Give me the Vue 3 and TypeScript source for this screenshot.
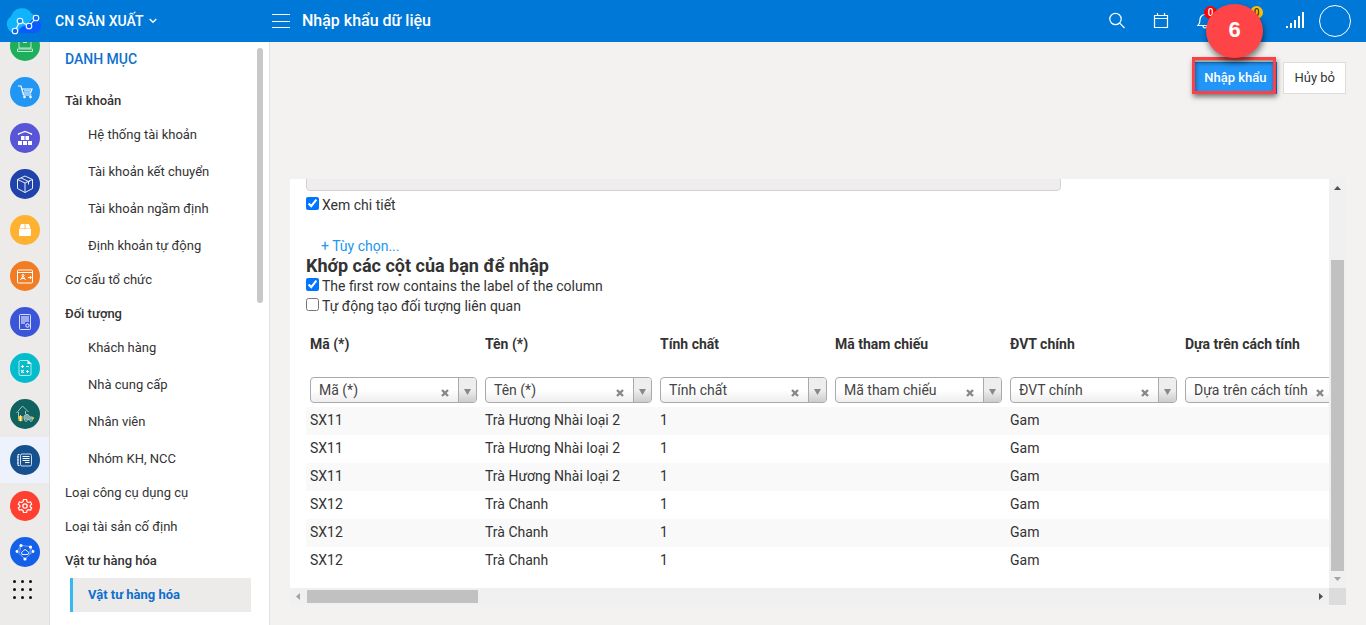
<script setup lang="ts">
import { ref } from 'vue'

interface MenuGroup {
  label: string
  header?: boolean
  items?: string[]
}

const modules = [
  { id: 'pos', label: 'Bán hàng', color: '#1fae5b' },
  { id: 'cart', label: 'Mua hàng', color: '#2196f3' },
  { id: 'store', label: 'Cửa hàng', color: '#5856d6' },
  { id: 'box', label: 'Kho', color: '#1f43a8' },
  { id: 'package', label: 'Thành phẩm', color: '#ffb232' },
  { id: 'board', label: 'Chuyển đổi', color: '#f17c24' },
  { id: 'invoice', label: 'Hóa đơn', color: '#3b55d9' },
  { id: 'calc', label: 'Tính giá', color: '#04bccb' },
  { id: 'asset', label: 'Tài sản', color: '#0f625f' },
  { id: 'ledger', label: 'Danh mục', color: '#15508f' },
  { id: 'gear', label: 'Thiết lập', color: '#ff3f30' },
  { id: 'network', label: 'Kết nối', color: '#1560e8' },
]
const activeModule = ref('ledger')

const menu: MenuGroup[] = [
  {
    label: 'Tài khoản',
    header: true,
    items: ['Hệ thống tài khoản', 'Tài khoản kết chuyển', 'Tài khoản ngầm định', 'Định khoản tự động'],
  },
  { label: 'Cơ cấu tổ chức' },
  { label: 'Đối tượng', header: true, items: ['Khách hàng', 'Nhà cung cấp', 'Nhân viên', 'Nhóm KH, NCC'] },
  { label: 'Loại công cụ dụng cụ' },
  { label: 'Loại tài sản cố định' },
  { label: 'Vật tư hàng hóa', header: true, items: ['Vật tư hàng hóa'] },
]
const activeItem = 'Vật tư hàng hóa'

const columns = ['Mã (*)', 'Tên (*)', 'Tính chất', 'Mã tham chiếu', 'ĐVT chính', 'Dựa trên cách tính']
const mapping = ref([...columns])
const rows: string[][] = [
  ['SX11', 'Trà Hương Nhài loại 2', '1', '', 'Gam', ''],
  ['SX11', 'Trà Hương Nhài loại 2', '1', '', 'Gam', ''],
  ['SX11', 'Trà Hương Nhài loại 2', '1', '', 'Gam', ''],
  ['SX12', 'Trà Chanh', '1', '', 'Gam', ''],
  ['SX12', 'Trà Chanh', '1', '', 'Gam', ''],
  ['SX12', 'Trà Chanh', '1', '', 'Gam', ''],
]

const showDetail = ref(true)
const firstRowLabel = ref(true)
const autoCreate = ref(false)
</script>

<template>
  <div class="app">
    <header class="topbar">
      <div class="brand">
        <svg class="logo" viewBox="0 0 38 28" aria-hidden="true">
          <path d="M9 26A9 9 0 0 1 5 9.500A11.500 11.500 0 0 1 26 7A8 8 0 0 1 32 13L24 26Z" fill="#0fb4fb" />
          <path d="M9 26C13 25 13 20 18 19S24 13 29 11.500A7.500 7.500 0 0 1 30 26Z" fill="#0a5cff" />
          <g stroke="#fff" stroke-width="1.100">
            <path d="M9 24L14 14L23 19L30 11" fill="none" />
            <circle cx="9" cy="24" r="2.800" fill="#0a6cf0" />
            <circle cx="14" cy="14" r="2.800" fill="#0a8cf8" />
            <circle cx="23" cy="19" r="2.800" fill="#0a5cff" />
            <circle cx="30" cy="11" r="2.800" fill="#0a6cf0" />
          </g>
        </svg>
        <button class="branch" type="button">
          CN SẢN XUẤT
          <svg width="8" height="6" viewBox="0 0 8 6" aria-hidden="true">
            <path d="M.7 1L4 4.300L7.300 1" fill="none" stroke="#fff" stroke-width="1.300" />
          </svg>
        </button>
      </div>
      <button class="burger" type="button" aria-label="Menu">
        <svg width="18" height="16" viewBox="0 0 18 16"><path d="M0 1.500H18M0 8.500H18M0 14.500H18" stroke="#fff" stroke-width="1.200" /></svg>
      </button>
      <h1>Nhập khẩu dữ liệu</h1>
      <div class="tools">
        <button type="button" aria-label="Tìm kiếm">
          <svg width="18" height="18" viewBox="0 0 18 18" fill="none" stroke="#fff" stroke-width="1.200">
            <circle cx="7.500" cy="7" r="5.700" /><path d="M11.700 11.200L16.500 16" />
          </svg>
        </button>
        <button type="button" aria-label="Lịch">
          <svg width="18" height="18" viewBox="0 0 18 18" fill="none" stroke="#fff" stroke-width="1.200">
            <path d="M2.500 3.500H15.500V15.500H2.500ZM2.500 6.500H15.500M5.500 1V3.500M12.500 1V3.500" />
          </svg>
        </button>
        <button type="button" aria-label="Thông báo">
          <svg width="18" height="18" viewBox="0 0 18 18" fill="none" stroke="#fff" stroke-width="1.200">
            <path d="M2 13.500C4 11.500 4 10 4 7.500A5 5 0 0 1 14 7.500C14 10 14 11.500 16 13.500ZM7 14C7 16.500 11 16.500 11 14" />
          </svg>
          <span class="badge">0</span>
        </button>
        <button class="chat" type="button" aria-label="Tin nhắn">
          <svg width="18" height="18" viewBox="0 0 18 18" fill="none" stroke="#fff" stroke-width="1.200">
            <path d="M2 3H16V13H8L4 16V13H2Z" />
          </svg>
          <span class="badge yellow">0</span>
        </button>
        <button type="button" aria-label="Tín hiệu">
          <svg width="18" height="18" viewBox="0 0 18 18" fill="#fff">
            <path d="M0 14H2V16H0ZM4 11H6V16H4ZM8 8H10V16H8ZM12 4H14V16H12ZM16 0H18V16H16Z" />
          </svg>
        </button>
        <button class="avatar" type="button" aria-label="Tài khoản"></button>
      </div>
    </header>

    <div class="body">
      <nav class="rail" aria-label="Phân hệ">
        <div class="rail-list">
          <button
            v-for="m in modules"
            :key="m.id"
            type="button"
            class="rail-item"
            :class="[m.id, { selected: m.id === activeModule }]"
            :aria-label="m.label"
            @click="activeModule = m.id"
          >
            <svg width="30" height="30" viewBox="0 0 30 30" fill="none" stroke="#fff" stroke-width="1">
              <circle cx="15" cy="15" r="15" :fill="m.color" stroke="none" />
              <g v-if="m.id === 'pos'" opacity=".7">
                <path d="M9 6H21V17H9ZM7.500 18H22.500V20.500H7.500ZM13 11.500H17" />
              </g>
              <g v-else-if="m.id === 'cart'">
                <path d="M8 9H11L13.500 18H21.500M11.800 12H22L20.500 16H13" stroke-width="1.200" />
                <path d="M14 13.900H20.500" />
                <circle cx="14.500" cy="20" r=".900" fill="#fff" /><circle cx="20.500" cy="20" r=".900" fill="#fff" />
              </g>
              <g v-else-if="m.id === 'store'">
                <path d="M8.500 12V11L15 8.500L21.500 11V12" stroke-width="1.200" />
                <path d="M11 13H14.500V17H11ZM15.500 13H19V17H15.500ZM8 18H12V22H8ZM13 18H17V22H13ZM18 18H22V22H18Z" fill="#fff" stroke="none" />
              </g>
              <g v-else-if="m.id === 'box'">
                <path d="M15 7L22.500 10.500V19.500L15 23.500L7.500 19.500V10.500ZM7.500 10.500L15 14L22.500 10.500M15 14V23.500M11 8.900L18.500 12.500V15.500M18.500 12.500L20 12" stroke-width=".900" />
              </g>
              <g v-else-if="m.id === 'package'" fill="#fff" stroke="none">
                <path d="M11 9H14.600V13.500H9.500ZM15.400 9H19L20.500 13.500H15.400ZM9 14H21V20Q21 21 20 21H10Q9 21 9 20Z" />
              </g>
              <g v-else-if="m.id === 'board'">
                <rect x="7.500" y="9" width="15" height="13" rx="1" /><path d="M7.500 11.500H22.500M18 16.500H21M20 15L21.500 16.500L20 18" />
                <circle cx="13" cy="14.500" r="1" /><path d="M13 15L10.500 19M13 15L15.500 19M11.500 17.500H14.500" />
              </g>
              <g v-else-if="m.id === 'invoice'">
                <rect x="9.500" y="7.500" width="11" height="15" rx="1" opacity=".8" />
                <path d="M11 10H19M11 12H19M11 14H19M11 16H15" /><circle cx="17.500" cy="18.500" r="1.700" />
              </g>
              <g v-else-if="m.id === 'calc'">
                <path d="M18 7.500H10.500Q9 7.500 9 9V21Q9 22.500 10.500 22.500H19.500Q21 22.500 21 21V10.500Z" opacity=".7" />
                <path d="M17.500 7L21.500 11H17.500Z" fill="#fff" stroke="none" />
                <path d="M11 13.500H14M12.500 12V15M16 13.500H19M11.200 17.200L13.800 19.800M13.800 17.200L11.200 19.800M16 18.500H19M17.500 17V20" stroke-width="1.100" />
              </g>
              <g v-else-if="m.id === 'asset'" stroke="#9fc4c2">
                <path d="M6.500 14L12.500 7L18.500 13M8.500 13V20M15.500 12V15" />
                <rect x="8.500" y="17" width="4" height="5" fill="#f5c32c" stroke="none" />
                <path d="M10.500 16V22.500" stroke="#fff" stroke-width=".700" />
                <path d="M14 20V17L16 15.500H18L20 18H22.500V20.500H14" fill="#7faaa8" />
                <circle cx="16" cy="21" r="1.300" fill="#0f625f" /><circle cx="21" cy="21" r="1.300" fill="#0f625f" />
                <path d="M22 18.500L24 19.500" stroke="#f5c32c" stroke-width="1.500" />
              </g>
              <g v-else-if="m.id === 'ledger'">
                <path d="M9.500 9.500H8V20.500H9.500M7 12H8.500M7 15H8.500M7 18H8.500" />
                <rect x="10.500" y="9" width="11" height="12" rx="1.500" opacity=".8" />
                <path d="M12.500 11.500H19.500M12.500 13.500H19.500M12.500 15.500H19.500M15 17.500H19.500" stroke-width="1.200" />
              </g>
              <g v-else-if="m.id === 'gear'" stroke-width="1.200">
                <path d="M13.500 8.500H16.500L17 10.700L18.700 11.500L20.500 10.800L21.700 13.200L20.200 14.500V15.700L21.700 17L20.500 19.300L18.500 18.600L17 19.500L16.500 21.500H13.500L13 19.500L11.400 18.600L9.500 19.300L8.300 17L9.800 15.700V14.500L8.300 13.200L9.500 10.800L11.400 11.500L13 10.700Z" stroke-linejoin="round" />
                <circle cx="15" cy="15" r="2.200" />
              </g>
              <g v-else>
                <path d="M11 8.500L20.500 9.500L23 14.500L15 22L7 14.500ZM11 8.500L9.500 16M20.500 9.500L20 17" stroke-width=".600" opacity=".7" />
                <path d="M12 17.500Q10.500 15 13 14.300Q15 11 17.300 14.300Q20 15 18 17.500Z" fill="#1560e8" stroke-width=".900" />
                <g fill="#fff" stroke="none"><circle cx="11" cy="8.500" r="1.600" /><circle cx="20.500" cy="10" r="1.600" /><circle cx="7" cy="14.500" r="1.400" /><circle cx="23" cy="14.500" r="1.400" /><circle cx="15" cy="22" r="1.600" /></g>
              </g>
            </svg>
          </button>
          <button class="apps" type="button" aria-label="Tất cả ứng dụng">
            <span v-for="n in 9" :key="n"></span>
          </button>
        </div>
      </nav>

      <aside class="sidebar">
        <nav class="menu" aria-label="Danh mục">
          <h2>DANH MỤC</h2>
          <section v-for="g in menu" :key="g.label">
            <h3 v-if="g.header">{{ g.label }}</h3>
            <a v-else class="plain" href="#">{{ g.label }}</a>
            <ul v-if="g.items">
              <li v-for="i in g.items" :key="i">
                <a href="#" :class="{ active: i === activeItem }">{{ i }}</a>
              </li>
            </ul>
          </section>
        </nav>
        <div class="side-scroll"><div class="side-thumb"></div></div>
      </aside>

      <main>
        <div class="actions">
          <div class="step-target">
            <button class="btn primary" type="button">Nhập khẩu</button>
            <span class="frame"></span>
            <span class="step">6</span>
          </div>
          <button class="btn" type="button">Hủy bỏ</button>
        </div>

        <div class="panel">
          <div class="content">
            <input class="file-name" type="text" aria-label="Tệp dữ liệu" disabled />
            <label class="check"><input v-model="showDetail" type="checkbox" />Xem chi tiết</label>
            <a class="options" href="#">+ Tùy chọn...</a>
            <h2>Khớp các cột của bạn để nhập</h2>
            <label class="check"><input v-model="firstRowLabel" type="checkbox" />The first row contains the label of the column</label>
            <label class="check"><input v-model="autoCreate" type="checkbox" />Tự động tạo đối tượng liên quan</label>

            <table>
              <thead>
                <tr><th v-for="c in columns" :key="c" scope="col">{{ c }}</th></tr>
                <tr>
                  <td v-for="(c, i) in columns" :key="c" class="map">
                    <div class="combo">
                      <select v-model="mapping[i]" :aria-label="c">
                        <option v-for="o in columns" :key="o">{{ o }}</option>
                      </select>
                      <button class="clear" type="button" aria-label="Xóa" @click="mapping[i] = ''">
                        <svg width="8" height="8" viewBox="0 0 8 8"><path d="M1 1L7 7M7 1L1 7" stroke="#888" stroke-width="2.400" /></svg>
                      </button>
                      <span class="arrow"><svg width="7" height="6" viewBox="0 0 7 6"><path d="M0 0H7L3.500 6Z" fill="#888" /></svg></span>
                    </div>
                  </td>
                </tr>
              </thead>
              <tbody>
                <tr v-for="(r, i) in rows" :key="i">
                  <td v-for="(v, j) in r" :key="j">{{ v }}</td>
                </tr>
              </tbody>
            </table>
          </div>
          <div class="vbar">
            <svg width="17" height="17" viewBox="0 0 17 17"><path d="M5 11H12L8.500 7Z" fill="#505050" /></svg>
            <div class="track"><div class="thumb"></div></div>
            <svg width="17" height="17" viewBox="0 0 17 17"><path d="M5 6H12L8.500 10Z" fill="#a3a3a3" /></svg>
          </div>
          <div class="hbar">
            <svg width="17" height="17" viewBox="0 0 17 17"><path d="M10 5V12L6 8.500Z" fill="#a3a3a3" /></svg>
            <div class="track"><div class="thumb"></div></div>
            <svg width="17" height="17" viewBox="0 0 17 17"><path d="M7 5V12L11 8.500Z" fill="#505050" /></svg>
          </div>
          <div class="corner"></div>
        </div>
      </main>
    </div>
  </div>
</template>

<style>
body {
  margin: 0;
  overflow: hidden;
}
</style>

<style scoped>
* {
  box-sizing: border-box;
}
.app {
  height: 100vh;
  display: flex;
  flex-direction: column;
  background: #f3f2f0;
  color: #333;
  font-family: Roboto, "Noto Sans", sans-serif;
  font-size: 14px;
  line-height: 20px;
}
button {
  font: inherit;
  padding: 0;
  border: 0;
  background: none;
  color: inherit;
  cursor: pointer;
}
a {
  color: inherit;
  text-decoration: none;
}
h1, h2, h3, ul {
  margin: 0;
  padding: 0;
}
h1, h2, h3 {
  font-weight: 500;
}
svg {
  display: block;
}
.topbar {
  flex: none;
  height: 42px;
  display: flex;
  align-items: center;
  background: #0078d7;
  color: #fff;
}
.brand {
  width: 272px;
  display: flex;
  align-items: center;
  gap: 11px;
  padding-left: 6px;
}
.logo {
  width: 38px;
  height: 28px;
}
.branch {
  display: flex;
  align-items: center;
  gap: 5px;
  font-weight: 500;
}
.burger {
  margin-right: 12px;
}
h1 {
  font-size: 16px;
}
.tools {
  margin-left: auto;
  margin-right: 15px;
  display: flex;
  align-items: center;
  gap: 26px;
}
.tools button {
  position: relative;
}
.tools .chat {
  margin-left: 2px;
}
.badge {
  position: absolute;
  left: 8px;
  top: -6px;
  width: 13px;
  height: 13px;
  border-radius: 50%;
  background: #f00;
  font-size: 10px;
  font-weight: 500;
  line-height: 13px;
  text-align: center;
}
.badge.yellow {
  background: #ffc107;
  color: #333;
}
.tools .avatar {
  width: 32px;
  height: 32px;
  margin-left: -11px;
  border: 1px solid #fff;
  border-radius: 50%;
}
.body {
  flex: 1;
  min-height: 0;
  display: flex;
}
.rail {
  flex: none;
  width: 50px;
  overflow: hidden;
  background: #ecebea;
  border-right: 1px solid #dfdfdf;
}
.rail-list {
  display: flex;
  flex-direction: column;
  margin-top: -19px;
}
.rail-item {
  height: 46px;
  padding-left: 10px;
}
.rail-item.selected {
  background: #edf2fc;
}
.apps {
  display: grid;
  grid-template-columns: repeat(3, 3px);
  gap: 5px;
  padding: 5px 13px;
}
.apps span {
  width: 3px;
  height: 3px;
  border-radius: 50%;
  background: #111;
}
.sidebar {
  flex: none;
  width: 220px;
  display: flex;
  background: #fff;
  border-right: 1px solid #e3e2e1;
  overflow: hidden;
}
.menu {
  flex: 1;
  padding-top: 7px;
  font-size: 13px;
}
.menu h2 {
  padding-left: 15px;
  margin-bottom: 15px;
  color: #0f6fce;
  font-size: 14px;
}
.menu h3,
.plain {
  display: block;
  padding-left: 15px;
  font-size: 13px;
  line-height: 34px;
}
.menu h3 {
  line-height: 33px;
}
.menu ul {
  display: flex;
  flex-direction: column;
  gap: 3px;
  padding: 1px 0 0 20px;
  list-style: none;
}
.menu li a {
  display: block;
  line-height: 34px;
  padding-left: 15px;
  border-left: 3px solid transparent;
}
.menu li a.active {
  background: #ecebea;
  border-color: #36b9ee;
  color: #0f6fce;
  font-weight: 700;
}
.side-scroll {
  width: 18px;
  padding: 6px 6px 0;
}
.side-thumb {
  width: 6px;
  height: 255px;
  border-radius: 3px;
  background: #c8c8c8;
}
main {
  flex: 1;
  min-width: 0;
  display: flex;
  flex-direction: column;
  padding: 20px;
}
.actions {
  display: flex;
  justify-content: flex-end;
  gap: 6px;
  margin-bottom: 85px;
  font-size: 13px;
}
.btn {
  height: 32px;
  padding: 0 10px;
  border: 1px solid #ddd;
  background: #fff;
}
.btn.primary {
  background: #2196f8;
  border-color: #1583e0;
  color: #fff;
  font-weight: 500;
}
.step-target {
  position: relative;
}
.frame {
  position: absolute;
  inset: -5px 1px 0 -1px;
  border: 3px solid #fb4147;
  box-shadow: 1px 3px 5px rgba(0, 0, 0, .5), inset 1px 3px 4px rgba(0, 0, 0, .4);
  pointer-events: none;
}
.step {
  position: absolute;
  left: 13px;
  bottom: 36px;
  width: 57px;
  height: 54px;
  border-radius: 50%;
  background: #fe4447;
  box-shadow: 1px 4px 6px rgba(0, 0, 0, .5);
  color: #fff;
  font: bold 22px/52px "Liberation Sans", sans-serif;
  text-align: center;
}
.panel {
  flex: 1;
  min-height: 0;
  display: grid;
  grid-template: minmax(0, 1fr) 17px / minmax(0, 1fr) 17px;
}
.content {
  background: #fff;
  overflow: hidden;
  padding: 0 16px;
}
.file-name {
  display: block;
  width: 75%;
  height: 32px;
  margin-top: -20px;
  margin-bottom: 4px;
  border: 1px solid #d3d3d3;
  border-radius: 4px;
  background: #efeded;
}
.check {
  display: flex;
  gap: 3px;
}
.check input {
  width: 13px;
  height: 13px;
  margin: 2px 0 0;
}
.options {
  display: block;
  margin-top: 21px;
  padding-left: 15px;
  color: #2196f3;
}
.content h2 {
  font-size: 18px;
  font-weight: 700;
}
table {
  table-layout: fixed;
  width: 1050px;
  margin-top: 14px;
  border-collapse: collapse;
}
th,
td {
  width: 175px;
  height: 28px;
  padding: 3px 4px 5px;
  text-align: left;
  font-weight: 400;
}
th {
  height: 43px;
  padding-top: 4px;
  font-weight: 700;
  vertical-align: top;
}
.map {
  padding: 4px;
}
.combo {
  position: relative;
  width: 167px;
}
.combo select {
  display: block;
  width: 100%;
  height: 26px;
  padding: 0 40px 0 8px;
  appearance: none;
  border: 1px solid #aaa;
  border-radius: 4px;
  background: linear-gradient(#fff 50%, #eee);
  color: #444;
  font: inherit;
}
.clear {
  position: absolute;
  right: 28px;
  top: 12px;
}
.arrow {
  position: absolute;
  right: 1px;
  top: 1px;
  width: 18px;
  height: 24px;
  display: flex;
  align-items: center;
  justify-content: center;
  padding-top: 4px;
  border-left: 1px solid #aaa;
  border-radius: 0 3px 3px 0;
  background: linear-gradient(#eee 50%, #ccc);
  pointer-events: none;
}
tbody tr:nth-child(odd) {
  background: #f9f9f9;
}
.vbar,
.hbar {
  display: flex;
  background: #f0f0f0;
}
.vbar {
  flex-direction: column;
}
.track {
  flex: 1;
}
.vbar .track {
  display: flex;
  flex-direction: column;
  justify-content: flex-end;
}
.vbar .thumb {
  height: 83%;
  margin: 0 2px;
  background: #c1c1c1;
}
.hbar .thumb {
  width: 17%;
  height: 13px;
  margin-top: 2px;
  background: #c1c1c1;
}
.corner {
  background: #dcdcdc;
}
</style>
